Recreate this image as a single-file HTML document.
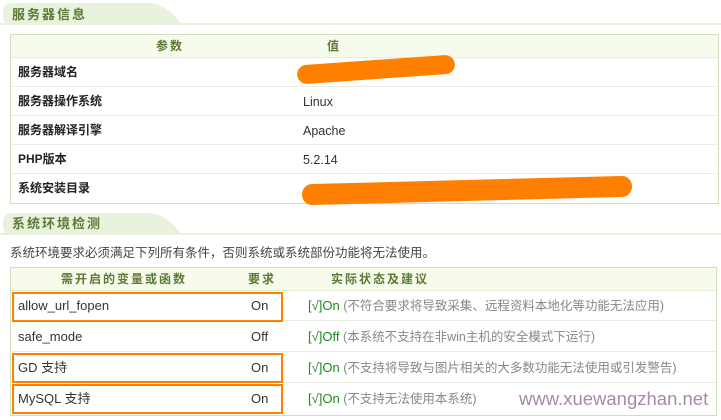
<html><head><style>
body{margin:0;width:721px;height:420px;background:#fff;position:relative;overflow:hidden;font-family:"Liberation Sans","Noto Sans CJK SC",sans-serif;font-size:12px;color:#333}
.a{position:absolute;line-height:16px;white-space:nowrap}
.tabline{position:absolute;left:0;width:721px;height:2px;background:#e8f2dc}
.tab{position:absolute;left:3px;width:150px;height:22px;background:#e8f2dc;border-radius:8px 0 0 8px}
.tab:after{content:"";position:absolute;right:-20px;top:0;width:40px;height:22px;background:#e8f2dc;border-radius:0 14px 0 0;transform:skewX(40deg)}
.tabt{position:absolute;left:12px;font-weight:bold;color:#5b7a35;font-size:13px;letter-spacing:2px;z-index:2;line-height:16px}
.box{position:absolute;border:1px solid #cfe0c0}
.hd{position:absolute;background:#f6fbeb;border-bottom:1px solid #e4efd6}
.row{position:absolute;left:0;right:0;border-bottom:1px solid #e8eee4}
.b{font-weight:bold;color:#222}
.g{color:#5b7a35;font-weight:bold;letter-spacing:2px}
.ob{position:absolute;border:2px solid #ff8000;left:12px;width:267px;height:26px}
.ok{color:#1e8a1e}
.gr{color:#888}
.smear{position:absolute;background:#ff8000;border-radius:10px}
</style></head><body>
<div class="tab" style="top:3px"></div><div class="tabline" style="top:23px"></div>
<div class="tabt" style="top:7px">服务器信息</div>
<div class="box" style="left:10px;top:34px;width:707px;height:168px">
<div class="hd" style="left:0;top:0;width:707px;height:22px"></div>
<div class="a g" style="left:145px;top:3px">参数</div><div class="a g" style="left:316px;top:3px">值</div>
<div class="row" style="top:22px;height:29px"></div><div class="row" style="top:51px;height:29px"></div><div class="row" style="top:80px;height:29px"></div><div class="row" style="top:109px;height:29px"></div>
<div class="a b" style="left:7px;top:29px">服务器域名</div>
<div class="a b" style="left:7px;top:58px">服务器操作系统</div>
<div class="a b" style="left:7px;top:87px">服务器解译引擎</div>
<div class="a b" style="left:7px;top:116px">PHP版本</div>
<div class="a b" style="left:7px;top:145px">系统安装目录</div>
<div class="a" style="left:292px;top:59px;font-size:12.5px">Linux</div>
<div class="a" style="left:292px;top:88px;font-size:12.5px">Apache</div>
<div class="a" style="left:292px;top:117px;font-size:12.5px">5.2.14</div>
</div>
<div class="smear" style="left:297px;top:60px;width:158px;height:19px;transform:rotate(-4deg)"></div>
<div class="smear" style="left:302px;top:180px;width:330px;height:21px;transform:rotate(-1.5deg)"></div>
<div class="tab" style="top:213px"></div><div class="tabline" style="top:233px"></div>
<div class="tabt" style="top:216px">系统环境检测</div>
<div class="a" style="left:10px;top:245px;color:#444;font-size:12.5px">系统环境要求必须满足下列所有条件，否则系统或系统部份功能将无法使用。</div>
<div class="box" style="left:10px;top:267px;width:705px;height:147px">
<div class="hd" style="left:0;top:0;width:705px;height:22px"></div>
<div class="a g" style="left:50px;top:3px">需开启的变量或函数</div><div class="a g" style="left:237px;top:3px">要求</div><div class="a g" style="left:320px;top:3px">实际状态及建议</div>
<div class="row" style="top:22px;height:30px"></div><div class="row" style="top:53px;height:30px"></div><div class="row" style="top:84px;height:30px"></div>
</div>
<div class="ob" style="top:292px"></div><div class="ob" style="top:353px"></div><div class="ob" style="top:384px"></div>
<div class="a" style="left:18px;top:298px;font-size:13px">allow_url_fopen</div><div class="a" style="left:251px;top:298px;font-size:13px">On</div>
<div class="a" style="left:18px;top:329px;font-size:13px">safe_mode</div><div class="a" style="left:251px;top:329px;font-size:13px">Off</div>
<div class="a" style="left:18px;top:360px;font-size:13px">GD 支持</div><div class="a" style="left:251px;top:360px;font-size:13px">On</div>
<div class="a" style="left:18px;top:391px;font-size:13px">MySQL 支持</div><div class="a" style="left:251px;top:391px;font-size:13px">On</div>
<div class="a" style="left:308px;top:298px;font-size:12.5px"><span class="ok" style="font-size:13px">[√]On</span> <span class="gr">(不符合要求将导致采集、远程资料本地化等功能无法应用)</span></div>
<div class="a" style="left:308px;top:329px;font-size:12.5px"><span class="ok" style="font-size:13px">[√]Off</span> <span class="gr">(本系统不支持在非win主机的安全模式下运行)</span></div>
<div class="a" style="left:308px;top:360px;font-size:12.5px"><span class="ok" style="font-size:13px">[√]On</span> <span class="gr">(不支持将导致与图片相关的大多数功能无法使用或引发警告)</span></div>
<div class="a" style="left:308px;top:391px;font-size:12.5px"><span class="ok" style="font-size:13px">[√]On</span> <span class="gr">(不支持无法使用本系统)</span></div>
<div class="a" style="left:519px;top:389px;font-size:18.5px;line-height:20px;color:#a68aa8">www.xuewangzhan.net</div>
</body></html>
